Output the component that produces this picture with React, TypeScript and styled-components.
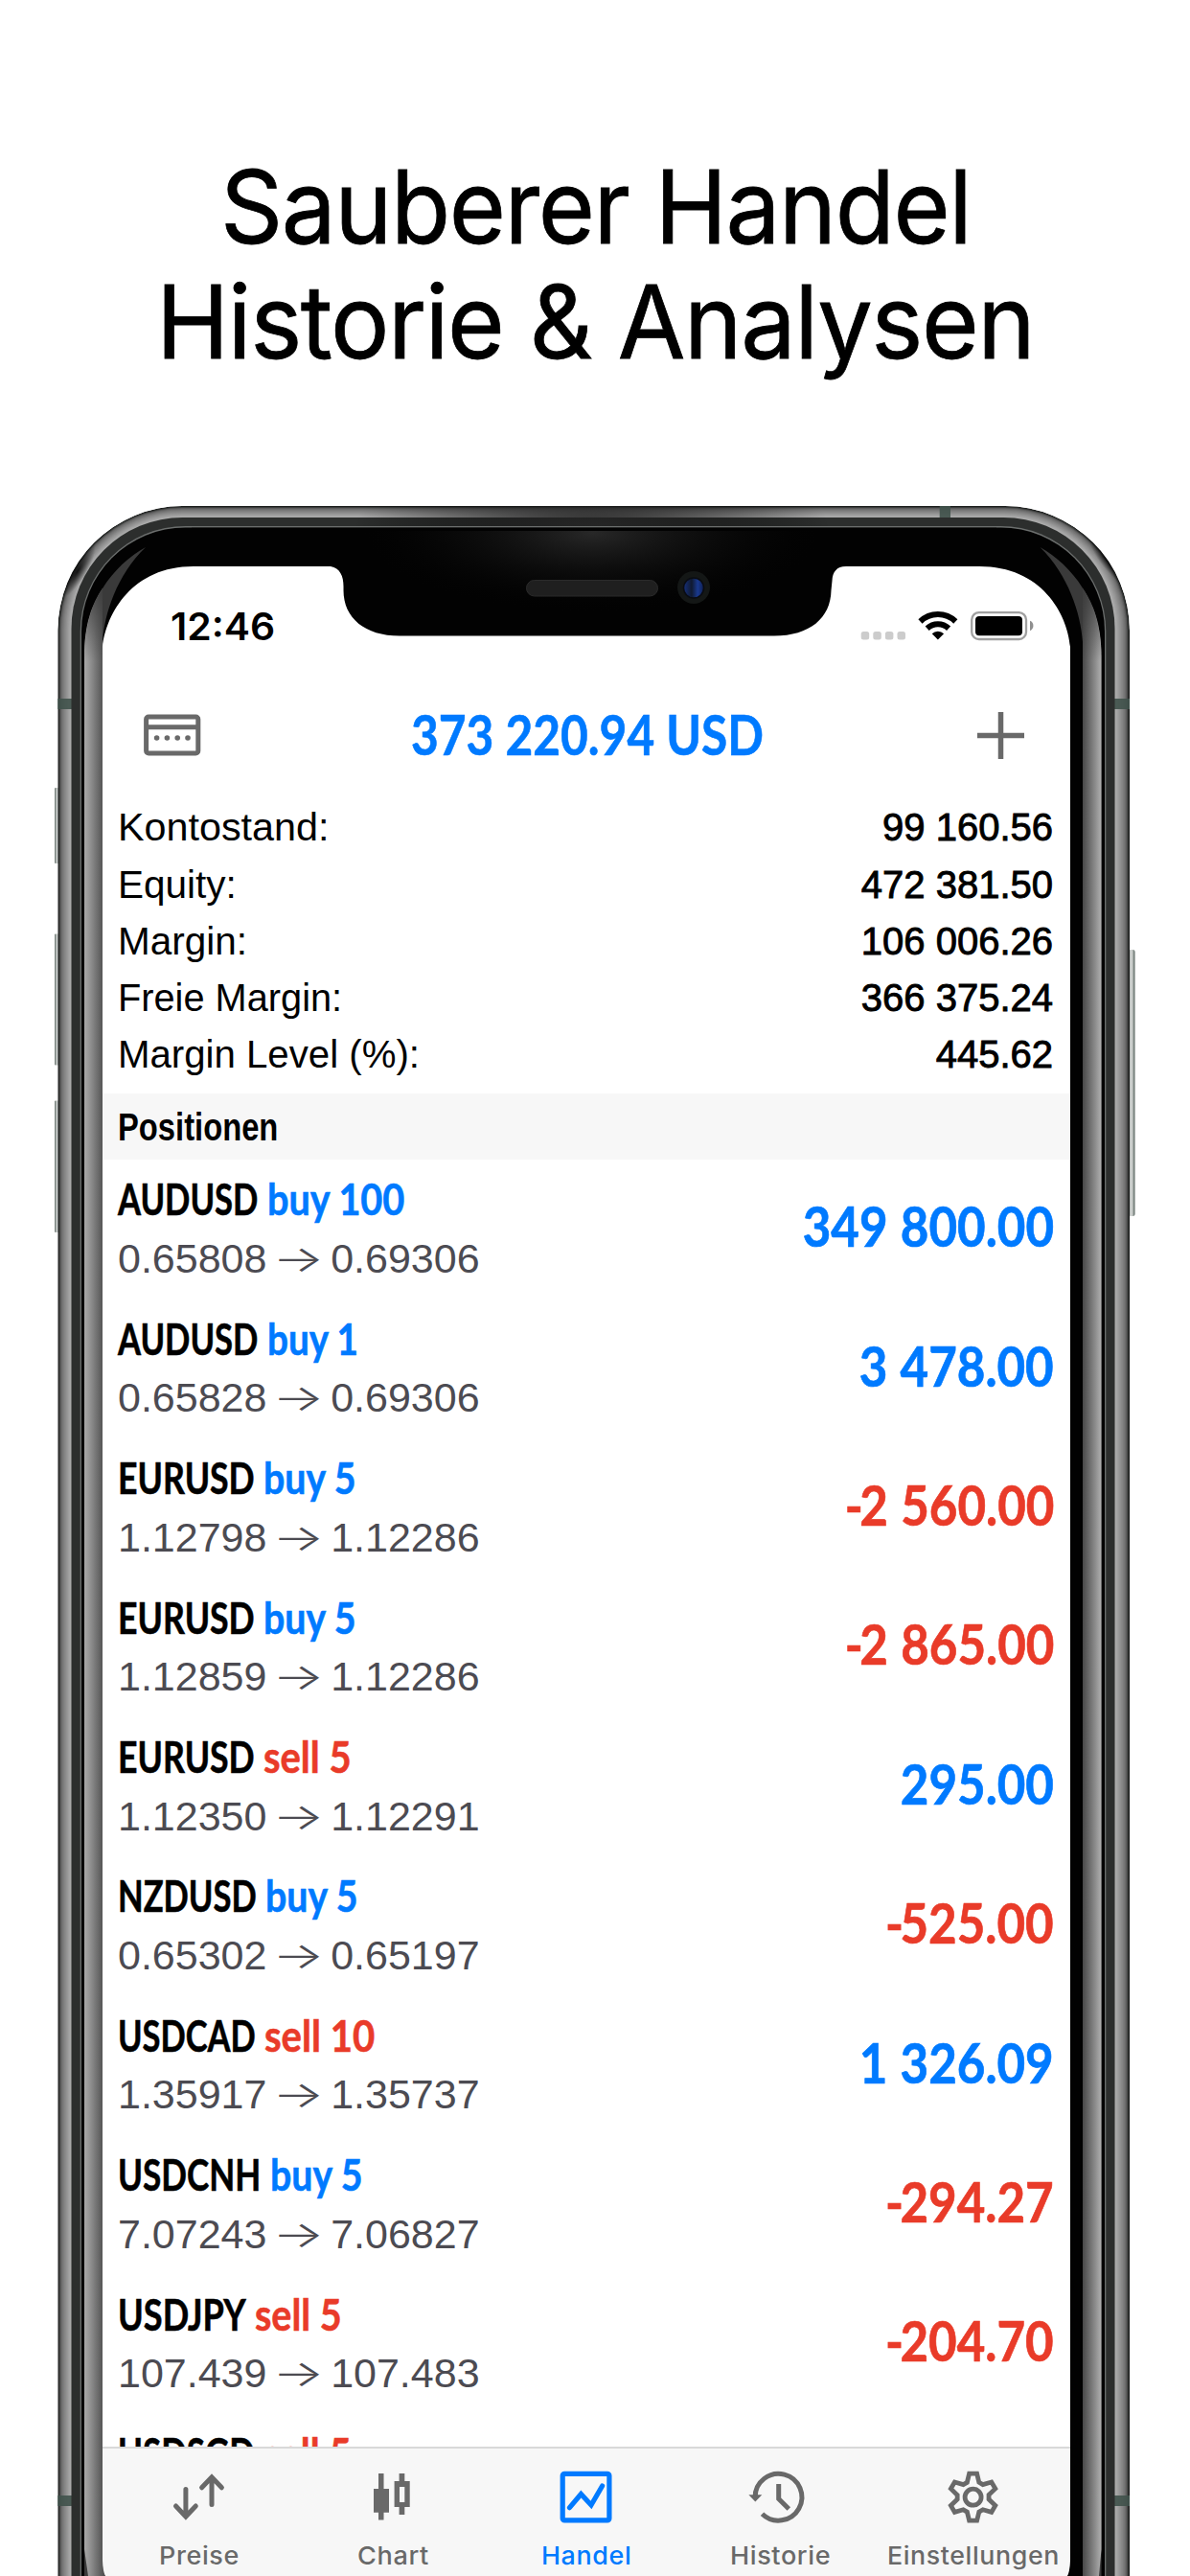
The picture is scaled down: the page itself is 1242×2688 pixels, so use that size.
import { useLayoutEffect, useRef } from "react"
import type { ReactNode } from "react"
import { createGlobalStyle, styled } from "styled-components"

const BLUE = "#007aff"
const RED = "#e93b29"
const GREY = "#696969"

const GlobalStyle = createGlobalStyle`
    * {
        box-sizing: border-box;
    }

    body {
        margin: 0;
        background: #ffffff;
        font-family: "Liberation Sans", Arial, sans-serif;
    }
`

const Page = styled.main`
    display: flex;
    flex-direction: column;
    width: 1242px;
    height: 2688px;
    overflow: hidden;
    background: #ffffff;
`

const Headline = styled.h1`
    display: flex;
    flex-direction: column;
    align-items: center;
    height: 528px;
    margin: 0;
    padding-top: 155.5px;
    font-family: Inter, sans-serif;
    font-size: 106px;
    font-weight: 400;
    line-height: 120px;
    letter-spacing: -1.5px;
    color: #000000;
    -webkit-text-stroke: 0.8px #000000;
`

const Phone = styled.section`
    position: relative;
    height: 2160px;
    padding: 63px 125px 0 107px;
`

const PhoneArt = styled.svg`
    position: absolute; // Fica atras do conteudo da tela
    top: 0;
    left: 0;
`

const Screen = styled.div`
    position: relative;
    display: flex;
    flex-direction: column;
    height: 100%;
`

const StatusBar = styled.div`
    display: flex;
    align-items: center;
    justify-content: space-between;
    height: 124px;
    padding: 0 38px 0 71px;
    font-family: Inter, sans-serif;
    font-size: 39px;
    font-weight: 600;
`

const NavBar = styled.header`
    display: flex;
    align-items: center;
    justify-content: space-between;
    height: 104px;
    padding: 0 48px 0 43px;
`

const NavTitle = styled.h2`
    margin: 0 4px 4px 0;
    font-family: Lato, sans-serif;
    font-size: 58px;
    font-weight: 700;
    line-height: 71px;
    color: ${BLUE};
    -webkit-text-stroke: 0.6px ${BLUE};
`

const Summary = styled.dl`
    margin: 0;
    padding: 15.3px 18px 9.9px 16px;
`

const SummaryRow = styled.div`
    display: flex;
    justify-content: space-between;
    height: 59.3px;
    font-size: 40px;
    line-height: 59.3px;
    color: #000000;

    dd {
        margin: 0;
        -webkit-text-stroke: 0.9px #000000;
    }
`

const SectionTitle = styled.h3`
    height: 69.6px;
    margin: 0;
    padding-left: 16px;
    background: #f7f7f7;
    font-size: 40px;
    line-height: 70.6px;
`

const Positions = styled.ul`
    flex: 1;
    min-height: 0;
    margin: 0;
    padding: 0;
    overflow: hidden;
    list-style: none;
`

const Position = styled.li`
    display: flex;
    align-items: center;
    justify-content: space-between;
    height: 145.4px;
    padding: 0 17px 7.4px 16px;
`

const Deal = styled.div`
    display: flex;
    gap: 9px;
    height: 56px;
    margin-bottom: 9.6px;
    font-family: Lato, sans-serif;
    font-size: 46px;
    font-weight: 700;
    line-height: 62px;
    -webkit-text-stroke: 0.6px;
`

const Side = styled.span<{ $sell: boolean }>`
    color: ${({ $sell }) => ($sell ? RED : BLUE)};
`

const Prices = styled.div`
    display: flex;
    height: 52px;
    font-size: 43px;
    line-height: 55px;
    color: #4c4b52;
`

const Arrow = styled.span`
    width: 66.7px;
    font-family: Inter, sans-serif;
    font-size: 38px;
    font-weight: 300;
    text-align: center;
    transform: scaleX(1.5);
`

const Amount = styled.strong<{ $loss: boolean }>`
    font-family: Lato, sans-serif;
    font-size: 58px;
    font-weight: 700;
    line-height: 70px;
    word-spacing: 1px;
    white-space: nowrap;
    color: ${({ $loss }) => ($loss ? RED : BLUE)};
    transform: scaleX(0.88);
    transform-origin: right;
    -webkit-text-stroke: 0.7px;

    // O sinal de menos fica mais estreito que os digitos
    &::first-letter {
        letter-spacing: ${({ $loss }) => ($loss ? "-4px" : "0")};
    }
`

const TabBar = styled.nav`
    display: grid;
    grid-template-columns: repeat(5, 1fr);
    height: 135px;
    border-top: 2px solid #d9d9d9;
    border-radius: 0 0 4px 4px / 0 0 18px 18px;
    background: #f7f7f7;
`

const Tab = styled.a<{ $active?: boolean }>`
    display: flex;
    flex-direction: column;
    align-items: center;
    gap: 14px;
    padding-top: 21px;
    font-family: Inter, sans-serif;
    font-size: 26px;
    font-weight: 450;
    line-height: 33px;
    letter-spacing: 0.6px;
    color: ${({ $active }) => ($active ? BLUE : GREY)};

    svg {
        flex: none;
        overflow: visible;
    }
`

const FitBox = styled.span<{ $width: number }>`
    display: block;
    width: ${({ $width }) => $width}px;
    white-space: nowrap;

    > span {
        display: inline-block;
        transform-origin: left;
    }
`

// Condenses (or stretches) one line of text to the given width
const Fit = ({ width, children }: { width: number; children: ReactNode }) => {
    const ref = useRef<HTMLSpanElement>(null)

    useLayoutEffect(() => {
        const el = ref.current
        if (el) el.style.transform = `scaleX(${width / el.offsetWidth})`
    }, [width, children])

    return <FitBox $width={width}><span ref={ref}>{children}</span></FitBox>
}

const summary = [
    { label: "Kontostand:", width: 221, value: "99 160.56" },
    { label: "Equity:", width: 123.5, value: "472 381.50" },
    { label: "Margin:", width: 134.5, value: "106 006.26" },
    { label: "Freie Margin:", width: 234.5, value: "366 375.24" },
    { label: "Margin Level (%):", width: 314.5, value: "445.62" },
]

const positions = [
    { symbol: "AUDUSD", w: 146.7, side: "buy 100", sw: 143, open: "0.65808", now: "0.69306", amount: "349 800.00" },
    { symbol: "AUDUSD", w: 146.7, side: "buy 1", sw: 95, open: "0.65828", now: "0.69306", amount: "3 478.00" },
    { symbol: "EURUSD", w: 142.5, side: "buy 5", sw: 96.5, open: "1.12798", now: "1.12286", amount: "-2 560.00" },
    { symbol: "EURUSD", w: 142.5, side: "buy 5", sw: 96.5, open: "1.12859", now: "1.12286", amount: "-2 865.00" },
    { symbol: "EURUSD", w: 142.5, side: "sell 5", sw: 92, open: "1.12350", now: "1.12291", amount: "295.00" },
    { symbol: "NZDUSD", w: 145, side: "buy 5", sw: 96.5, open: "0.65302", now: "0.65197", amount: "-525.00" },
    { symbol: "USDCAD", w: 144, side: "sell 10", sw: 115, open: "1.35917", now: "1.35737", amount: "1 326.09" },
    { symbol: "USDCNH", w: 149.5, side: "buy 5", sw: 96.5, open: "7.07243", now: "7.06827", amount: "-294.27" },
    { symbol: "USDJPY", w: 133.5, side: "sell 5", sw: 91, open: "107.439", now: "107.483", amount: "-204.70" },
    { symbol: "USDSGD", w: 143, side: "sell 5", sw: 92 },
]

// Concentric steps of the polished metal edge, from the outside in
const metal = [
    "#1c1e1d", "#3a3c3b", "#5b5b5b", "#6c6c6c", "#777777", "#808080", "#888888",
    "#909090", "#979797", "#9e9e9e", "#a5a5a5", "#ababab",
]

const gear = Array.from({ length: 6 }, (_, k) => {
    const turn = (x: number, y: number) => {
        const a = (k * Math.PI) / 3
        return `${(x * Math.cos(a) - y * Math.sin(a)).toFixed(2)},${(x * Math.sin(a) + y * Math.cos(a)).toFixed(2)}`
    }
    return [turn(-4, -24.5), turn(4, -24.5), turn(6.2, -15.4), turn(10.2, -13.1)].join(" ")
}).join(" ")

const Bezel = () => (
    <PhoneArt width="1242" height="2160" viewBox="0 528 1242 2160">
        <defs>
            <linearGradient id="railL">
                <stop offset="0" stopColor="#a8a8a8" />
                <stop offset="0.3" stopColor="#8f8f8f" />
                <stop offset="1" stopColor="#484848" />
            </linearGradient>
            <linearGradient id="railR">
                <stop offset="0" stopColor="#484848" />
                <stop offset="0.7" stopColor="#8f8f8f" />
                <stop offset="1" stopColor="#b0b0b0" />
            </linearGradient>
            <linearGradient id="fade" x1="0" x2="0" y1="600" y2="690" gradientUnits="userSpaceOnUse">
                <stop offset="0" stopColor="#3a3a3a" />
                <stop offset="1" stopColor="#3a3a3a" stopOpacity="0" />
            </linearGradient>
            <radialGradient id="shine">
                <stop offset="0" stopColor="#282828" />
                <stop offset="1" stopColor="#000000" stopOpacity="0" />
            </radialGradient>
            <radialGradient id="spot">
                <stop offset="0" stopColor="#000000" stopOpacity="0.85" />
                <stop offset="1" stopColor="#000000" stopOpacity="0" />
            </radialGradient>
            <linearGradient id="lens">
                <stop offset="0" stopColor="#16307c" />
                <stop offset="0.4" stopColor="#101a30" />
                <stop offset="0.7" stopColor="#19398f" />
                <stop offset="1" stopColor="#0f1f50" />
            </linearGradient>
            <linearGradient id="key">
                <stop offset="0" stopColor="#66716c" />
                <stop offset="0.5" stopColor="#cfd3d1" />
                <stop offset="1" stopColor="#a9aeac" />
            </linearGradient>
            <linearGradient id="keyR">
                <stop offset="0" stopColor="#a9aeac" />
                <stop offset="0.5" stopColor="#d5d8d6" />
                <stop offset="1" stopColor="#55625c" />
            </linearGradient>
            <clipPath id="body">
                <rect x="60.3" y="528" width="1118.7" height="2400" rx="130" />
            </clipPath>
        </defs>

        <rect x="57" y="822" width="5" height="79" rx="1" fill="url(#key)" />
        <rect x="57" y="974.5" width="5" height="137" rx="1" fill="url(#key)" />
        <rect x="57" y="1148.5" width="5" height="137.5" rx="1" fill="url(#key)" />
        <rect x="1178" y="991" width="6.5" height="278" rx="2" fill="url(#keyR)" />

        <g clipPath="url(#body)">
            {metal.map((fill, i) => (
                <rect
                    key={fill}
                    x={60.3 + i * 1.18}
                    y={528 + i}
                    width={1118.7 - i * 2.44}
                    height="2400"
                    rx={130 - i * 1.2}
                    fill={fill}
                />
            ))}
            <ellipse cx="81" cy="596" rx="9" ry="32" transform="rotate(32 81 596)" fill="url(#spot)" />
            <ellipse cx="1158" cy="585" rx="9" ry="34" transform="rotate(-38 1158 585)" fill="url(#spot)" />
            <path d="M60 729h15v11h-15zM1163 729h17v11h-17zM60 2604h15v11h-15zM1163 2604h17v11h-17zM980.7 528h11.3v13h-11.3z" fill="#40524b" fillOpacity="0.9" />
        </g>

        <rect x="74.5" y="540" width="1089" height="2400" rx="116" fill="#2c2e2d" />
        <rect x="83.7" y="549" width="1070.6" height="2400" rx="110" fill="#6b6e6d" />
        <rect x="85" y="550.5" width="1068" height="2400" rx="108.5" fill="#020202" />
        <ellipse cx="618" cy="556" rx="250" ry="86" fill="url(#shine)" />
        <rect x="200" y="549" width="840" height="1.5" fill="#6b6e6d" />
        <rect x="200" y="550.5" width="840" height="3.5" fill="#020202" />

        <path d="M152 571C118 590 88 628 88 685V2688H107V670C109 640 122 600 152 571Z" fill="#3a3a3a" />
        <path d="M107 614C96 630 88 652 88 685V2660L92 2688H110L107 2670Z" fill="url(#railL)" />
        <path d="M107 614C96 630 88 652 88 690H107Z" fill="url(#fade)" />
        <path d="M1085.500 571C1119 590 1149.500 628 1149.500 685V2688H1130V670C1128 640 1115 600 1085.500 571Z" fill="#3a3a3a" />
        <path d="M1130 614C1141 630 1149.500 652 1149.500 685V2660L1147 2688H1130Z" fill="url(#railR)" />
        <path d="M1130 614C1141 630 1149.500 652 1149.500 690H1130Z" fill="url(#fade)" />

        <path
            d="M107 675C111 640 138 591 202 591H345C355 593 358.500 601 358.500 612V616C358.500 645 381 663.500 417 663.500H808C845 663.500 867 645 867.500 616L868.500 606C869 597 873 591 883 591H1022C1087 591 1114 640 1117 675V2670L1114 2688H110L107 2670Z"
            fill="#ffffff"
        />

        <rect x="549.5" y="605.5" width="137" height="16.500" rx="8.200" fill="#1f1f1f" stroke="#2b2b2b" />
        <circle cx="724" cy="613" r="17" fill="#141716" />
        <circle cx="724" cy="613.500" r="10.500" fill="url(#lens)" stroke="#0a0c12" strokeWidth="1.500" />
    </PhoneArt>
)

const StatusIcons = () => (
    <svg width="181" height="34" viewBox="898 636 181 34">
        {[898.7, 911.3, 923.9, 936.5].map((x) => (
            <rect key={x} x={x} y="659" width="8.5" height="8.5" rx="2.5" fill="#cccccc" />
        ))}
        <g fill="none" stroke="#000000" strokeWidth="6">
            <path d="M960.500 648.500A26.500 26.500 0 0 1 997.300 648.500" />
            <path d="M967.700 655.700A16.300 16.300 0 0 1 990.100 655.700" />
        </g>
        <path d="M978.900 667.500L972.700 661.300A8.800 8.800 0 0 1 985.100 661.300Z" />
        <rect x="1014.200" y="639.200" width="56.800" height="27.800" rx="7.500" fill="none" stroke="#a0a0a0" strokeWidth="2.300" />
        <rect x="1018" y="643" width="49" height="20.300" rx="4" />
        <path d="M1075 647.800C1079.600 649.500 1079.600 656.500 1075 658.200Z" fill="#8f8f8f" />
    </svg>
)

const CardIcon = () => (
    <svg width="60" height="44" viewBox="0 0 60 44" fill={GREY}>
        <rect x="2.600" y="3" width="54.200" height="38" rx="2.500" fill="none" stroke={GREY} strokeWidth="5" />
        <path d="M3 11.300h54v5h-54z" />
        {[13.6, 24.4, 35.2, 46].map((x) => <circle key={x} cx={x} cy="25" r="2.800" />)}
    </svg>
)

const PlusIcon = () => (
    <svg width="49" height="49" viewBox="0 0 49 49">
        <path d="M24.500 0V49M0 24.500H49" stroke={GREY} strokeWidth="5.500" />
    </svg>
)

const tabs = [
    {
        label: "Preise",
        width: 84,
        icon: (
            <g fill="none" stroke="currentColor" strokeWidth="5" strokeLinecap="round">
                <path d="M15.900 21.500V48M5.500 39L15.900 50L26.300 39" />
                <path d="M43 37.500V11M32.600 19.800L43 8.800L53.400 19.800" />
            </g>
        ),
    },
    {
        label: "Chart",
        width: 75,
        icon: (
            <g fill="currentColor">
                <path d="M15 5h5.500v16h5.500v24.700h-5.500v7.800h-5.500v-7.800h-5v-24.700h5z" />
                <path fillRule="evenodd" d="M36.600 5h5.700v8h5.400v27h-5.400v8h-5.700v-8h-5v-27h5zM37 19v16h5.300v-16z" />
            </g>
        ),
    },
    {
        label: "Handel",
        width: 94,
        active: true,
        icon: (
            <g fill="none" stroke="currentColor" strokeWidth="5.200">
                <rect x="5.200" y="5.300" width="48.700" height="48.600" rx="2" />
                <path d="M12.500 40.700L24.400 26.500L35 38L46.600 18" strokeLinecap="round" />
            </g>
        ),
    },
    {
        label: "Historie",
        width: 105,
        icon: (
            <g fill="none" stroke="currentColor" strokeWidth="5">
                <path d="M4.100 29.700A24.400 24.400 0 1 1 11.500 47.200" />
                <path d="M28.700 16V31.500L39.300 42" />
                <path d="M-2.600 27.300H11.300L4.300 34.500Z" fill="currentColor" stroke="none" />
            </g>
        ),
    },
    {
        label: "Einstellungen",
        width: 180,
        icon: (
            <g transform="translate(29.6 29.7)" fill="none" stroke="currentColor" strokeWidth="4.800">
                <polygon points={gear} />
                <circle r="8.500" />
            </g>
        ),
    },
]

export default () => <>
    <GlobalStyle />
    <Page>
        <Headline>
            <Fit width={783}>Sauberer Handel</Fit>
            <Fit width={916}>Historie &amp; Analysen</Fit>
        </Headline>
        <Phone>
            <Bezel />
            <Screen>
                <StatusBar>
                    <Fit width={109}>12:46</Fit>
                    <StatusIcons />
                </StatusBar>
                <NavBar>
                    <CardIcon />
                    <NavTitle><Fit width={368}>373 220.94 USD</Fit></NavTitle>
                    <PlusIcon />
                </NavBar>
                <Summary>
                    {summary.map(({ label, width, value }) => (
                        <SummaryRow key={label}>
                            <dt><Fit width={width}>{label}</Fit></dt>
                            <dd>{value}</dd>
                        </SummaryRow>
                    ))}
                </Summary>
                <SectionTitle><Fit width={167}>Positionen</Fit></SectionTitle>
                <Positions>
                    {positions.map((p, i) => (
                        <Position key={i}>
                            <div>
                                <Deal>
                                    <Fit width={p.w}>{p.symbol}</Fit>
                                    <Side $sell={p.side.startsWith("sell")}><Fit width={p.sw}>{p.side}</Fit></Side>
                                </Deal>
                                <Prices>
                                    {p.open && <>{p.open}<Arrow>→</Arrow>{p.now}</>}
                                </Prices>
                            </div>
                            {p.amount && <Amount $loss={p.amount.startsWith("-")}>{p.amount}</Amount>}
                        </Position>
                    ))}
                </Positions>
                <TabBar>
                    {tabs.map(({ label, width, active, icon }) => (
                        <Tab key={label} $active={active}>
                            <svg width="60" height="60" viewBox="0 0 60 60">{icon}</svg>
                            <Fit width={width}>{label}</Fit>
                        </Tab>
                    ))}
                </TabBar>
            </Screen>
        </Phone>
    </Page>
</>
